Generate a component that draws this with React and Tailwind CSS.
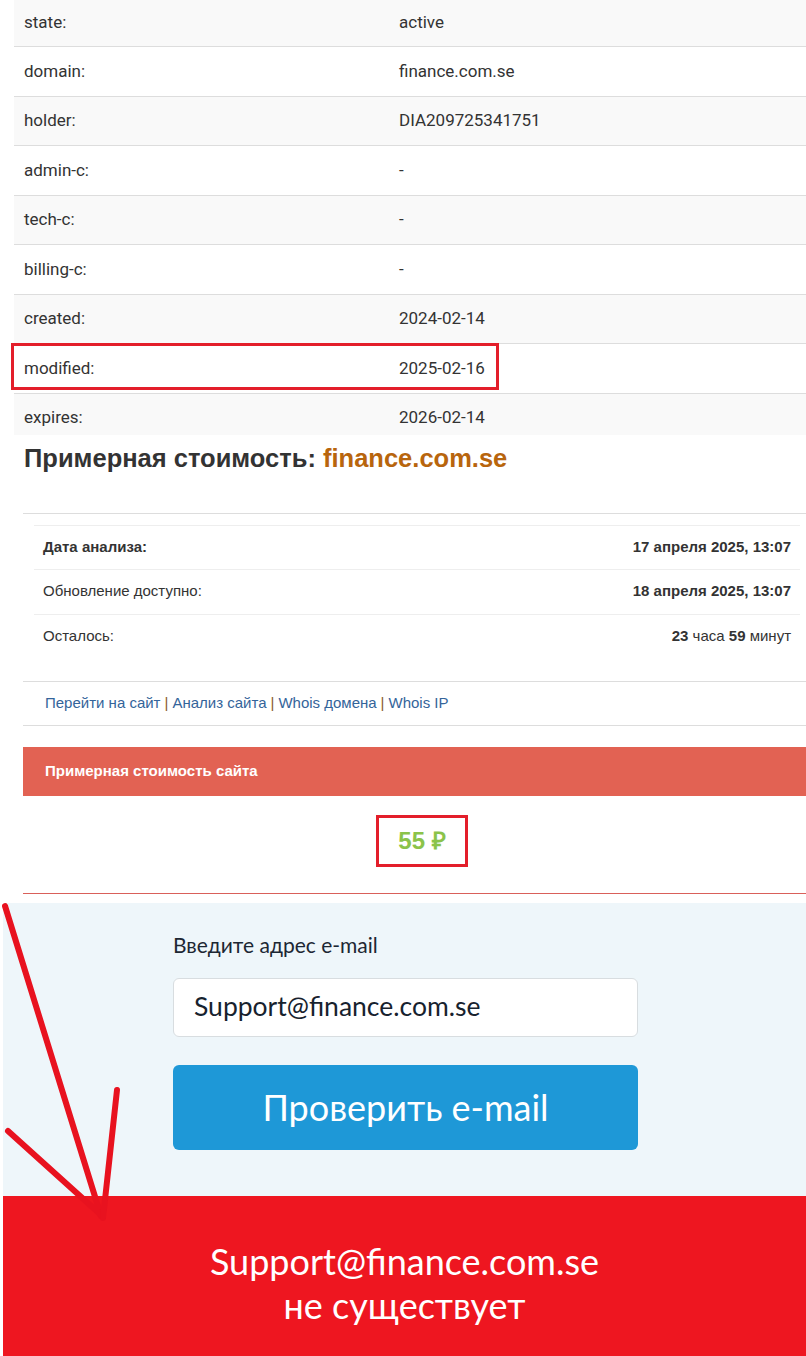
import React from 'react';

const whois = [
  ['state:', 'active'],
  ['domain:', 'finance.com.se'],
  ['holder:', 'DIA209725341751'],
  ['admin-c:', '-'],
  ['tech-c:', '-'],
  ['billing-c:', '-'],
  ['created:', '2024-02-14'],
  ['modified:', '2025-02-16'],
  ['expires:', '2026-02-14'],
];

const Sep = () => <span className="text-[#8b5a2b] px-[4px]">|</span>;

export default function App() {
  return (
    <div className="relative w-[806px] h-[1356px] overflow-hidden bg-white">
      {/* whois table */}
      <div className="pl-[14px] font-['Roboto',sans-serif] text-[17px] text-[#333]">
        {whois.map(([k, v], i) => {
          const first = i === 0;
          const last = i === whois.length - 1;
          const h = first
            ? 'h-[46px]'
            : last
            ? 'h-[42px] pt-[8px] border-t border-[#ddd]'
            : 'h-[49.5px] border-t border-[#ddd]';
          return (
            <div
              key={k}
              className={`relative flex items-center ${h} ${i % 2 === 0 ? 'bg-[#f9f9f9]' : 'bg-white'}`}
            >
              <div className="w-[375px] pl-[10px]">{k}</div>
              <div className="pl-[10px]">{v}</div>
              {k === 'modified:' && (
                <div className="absolute left-[-3px] top-[-1px] w-[488px] h-[47px] border-[3px] border-[#e31e2a]" />
              )}
            </div>
          );
        })}
      </div>

      {/* estimated cost */}
      <div className="pl-[23px] font-['Liberation_Sans',Arial,sans-serif]">
        <h2 className="pl-[1px] pt-[6px] text-[25.5px] font-bold leading-[34px] text-[#333]">
          Примерная стоимость: <span className="text-[#b8650d]">finance.com.se</span>
        </h2>

        <div className="mt-[38px] border-t border-[#ddd] pt-[11px]">
          <div className="ml-[11px] mr-[6px] border-t border-[#eee] text-[15px] text-[#333]">
            <div className="flex justify-between items-center h-[44px] px-[9px] border-b border-[#eee]">
              <span className="font-bold">Дата анализа:</span>
              <span className="font-bold">17 апреля 2025, 13:07</span>
            </div>
            <div className="flex justify-between items-center h-[45px] px-[9px] border-b border-[#eee]">
              <span>Обновление доступно:</span>
              <span className="font-bold">18 апреля 2025, 13:07</span>
            </div>
            <div className="flex justify-between items-center h-[44px] px-[9px]">
              <span>Осталось:</span>
              <span>
                <b>23</b> часа <b>59</b> минут
              </span>
            </div>
          </div>

          <div className="mt-[22px] border-t border-b border-[#ddd] h-[45px] flex items-center pl-[22px] text-[15px] text-[#34649a]">
            <span>Перейти на сайт</span>
            <Sep />
            <span>Анализ сайта</span>
            <Sep />
            <span>Whois домена</span>
            <Sep />
            <span>Whois IP</span>
          </div>

          <div className="mt-[21px] h-[49px] bg-[#e26253] flex items-center pl-[22px] text-[15px] font-bold text-white">
            Примерная стоимость сайта
          </div>

          <div className="h-[98px] flex items-center justify-center border-b border-[#d9605a]">
            <div className="relative -top-[3px] ml-[15px] w-[92px] h-[52px] border-[3px] border-[#e31e2a] flex items-center justify-center text-[24px] font-bold text-[#8bc34a]">
              55 ₽
            </div>
          </div>
        </div>
      </div>

      {/* e-mail check */}
      <div className="mt-[9px] ml-[3px] bg-[#eef6fa] h-[293px] font-['Lato',sans-serif] pl-[170px] pt-[28px]">
        <div className="text-[21px] leading-[28px] text-[#1c2733]">Введите адрес e-mail</div>
        <div className="mt-[19px] w-[465px] h-[59px] bg-white border border-[#d8dde0] rounded-[6px] flex items-center pl-[20px] text-[26.5px] text-[#17222e]">
          Support@finance.com.se
        </div>
        <div className="mt-[28px] w-[465px] h-[85px] bg-[#1e98d7] rounded-[6px] flex items-center justify-center text-[36px] text-white">
          Проверить e-mail
        </div>
      </div>

      <div className="ml-[3px] bg-[#ee1620] h-[160px] flex flex-col items-center justify-center pt-[14px] font-['Lato',sans-serif] text-white text-[36px] leading-[44px]">
        <div>Support@finance.com.se</div>
        <div>не существует</div>
      </div>

      {/* hand-drawn arrow */}
      <svg className="absolute left-0 top-0 pointer-events-none" width="806" height="1356">
        <g stroke="#e8121f" strokeWidth="6" strokeLinecap="round" fill="none">
          <path d="M5 906 L101 1216" />
          <path d="M8 1131 L100 1214" />
          <path d="M117 1090 L103 1218" />
        </g>
      </svg>
    </div>
  );
}
